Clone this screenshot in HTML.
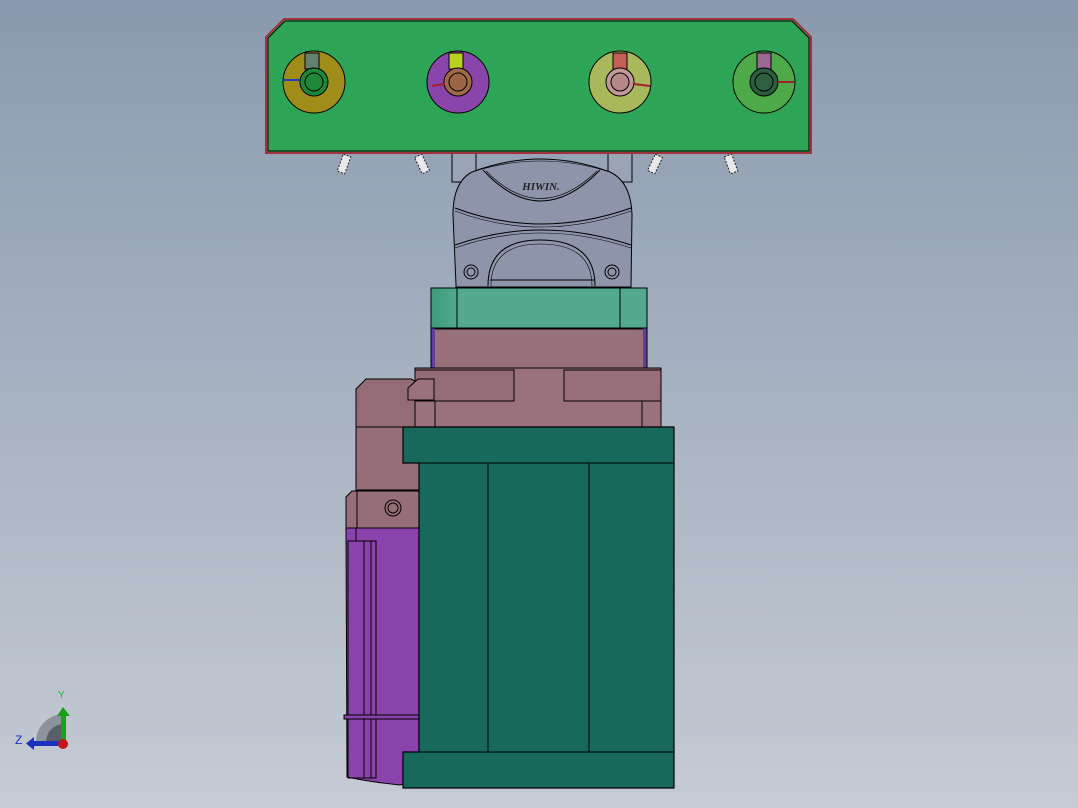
<!DOCTYPE html>
<html><head><meta charset="utf-8"><style>
html,body{margin:0;padding:0;width:1078px;height:808px;overflow:hidden}
</style></head><body>
<svg width="1078" height="808" viewBox="0 0 1078 808" xmlns="http://www.w3.org/2000/svg" font-family="Liberation Sans, sans-serif">
<defs>
<linearGradient id="bg" x1="0" y1="0" x2="0" y2="1">
<stop offset="0" stop-color="#8a9aaf"/><stop offset="1" stop-color="#c6cbd4"/>
</linearGradient>
<linearGradient id="tl" x1="0" y1="0" x2="1" y2="0">
<stop offset="0" stop-color="#3e9a7c"/><stop offset="0.12" stop-color="#52a98e"/><stop offset="1" stop-color="#52a98e"/>
</linearGradient>
</defs>
<rect width="1078" height="808" fill="url(#bg)"/>
<g stroke="#000" stroke-width="1">
<!-- screws -->
<g fill="#e8e8e8" stroke="#222" stroke-dasharray="2 1.5">
<rect x="340" y="155" width="8" height="18" transform="rotate(20 344 164)"/>
<rect x="418" y="155" width="8" height="18" transform="rotate(-25 422 164)"/>
<rect x="651" y="155" width="8" height="18" transform="rotate(25 655 164)"/>
<rect x="727" y="155" width="8" height="18" transform="rotate(-20 731 164)"/>
</g>
<rect x="452" y="150" width="24" height="32" fill="#9aa4b5"/>
<rect x="608" y="150" width="24" height="32" fill="#9aa4b5"/>
<!-- carriage -->
<path d="M456 285 L453 215 Q453 182 472 172 Q540 146 610 172 Q631 182 632 215 L631 287 L456 287 Z" fill="#8e95ab"/>
<path d="M472 172 Q540 150 610 172" fill="none" stroke-width="0.6"/>
<path d="M483 170 Q540 232 600 170" fill="none"/>
<path d="M486 171 Q540 226 597 171" fill="none" stroke-width="0.6"/>
<path d="M455 208 Q540 240 631 208" fill="none"/>
<path d="M455 211 Q540 243 631 211" fill="none" stroke-width="0.6"/>
<path d="M455 245 Q540 215 631 245" fill="none"/>
<path d="M455 248 Q540 218 631 248" fill="none" stroke-width="0.6"/>
<path d="M488 286 Q488 240 540 240 Q595 240 595 286" fill="none"/>
<path d="M491 286 Q491 244 540 244 Q592 244 592 286" fill="none" stroke-width="0.6"/>
<line x1="490" y1="280" x2="594" y2="280"/>
<circle cx="471" cy="272" r="7" fill="none"/><circle cx="471" cy="272" r="4" fill="none"/>
<circle cx="612" cy="272" r="7" fill="none"/><circle cx="612" cy="272" r="4" fill="none"/>
<text x="541" y="190" font-size="11" font-family="Liberation Serif, serif" font-style="italic" font-weight="bold" text-anchor="middle" fill="#222" stroke="none">HIWIN.</text>
<!-- plate -->
<path d="M266 153 L266 37 L284 19 L793 19 L811 37 L811 153 Z" fill="#2ea456" stroke="#a0303a" stroke-width="2"/>
<path d="M268 151 L268 38 L285 21 L792 21 L809 38 L809 151 Z" fill="#2ea456" stroke="#000"/>
<g>
<circle cx="314" cy="82" r="31" fill="#a08c18"/>
<rect x="305" y="53" width="14" height="16" fill="#668070"/>
<circle cx="314" cy="82" r="14" fill="#1a8a38"/><circle cx="314" cy="82" r="9" fill="#1f8838"/>
<line x1="284" y1="80" x2="300" y2="80" stroke="#2040c0" stroke-width="2"/>
<circle cx="458" cy="82" r="31" fill="#8a45ab"/>
<rect x="449" y="53" width="14" height="16" fill="#b8d020"/>
<circle cx="458" cy="82" r="14" fill="#a06a48"/><circle cx="458" cy="82" r="9" fill="#9c6644"/>
<line x1="432" y1="86" x2="445" y2="84" stroke="#a02030" stroke-width="2"/>
<circle cx="620" cy="82" r="31" fill="#a8b85a"/>
<rect x="613" y="53" width="14" height="16" fill="#c06058"/>
<circle cx="620" cy="82" r="14" fill="#c49898"/><circle cx="620" cy="82" r="9" fill="#b48888"/>
<line x1="634" y1="84" x2="650" y2="86" stroke="#a02030" stroke-width="2"/>
<circle cx="764" cy="82" r="31" fill="#4eaa48"/>
<rect x="757" y="53" width="14" height="16" fill="#9a6890"/>
<circle cx="764" cy="82" r="14" fill="#2a5e3e"/><circle cx="764" cy="82" r="9" fill="#2c6040"/>
<line x1="778" y1="82" x2="794" y2="82" stroke="#a02030" stroke-width="2"/>
</g>
<rect x="431" y="288" width="216" height="40" fill="url(#tl)"/>
<line x1="457" y1="288" x2="457" y2="328"/><line x1="620" y1="288" x2="620" y2="328"/>
<rect x="431" y="328" width="216" height="40" fill="#62409a"/>
<rect x="435" y="329" width="208" height="39" fill="#98707a" stroke="none"/>
<line x1="435" y1="329" x2="643" y2="329"/>
<rect x="415" y="368" width="246" height="59" fill="#9a727b"/>
<rect x="415" y="370" width="99" height="31" fill="#946c76"/>
<rect x="564" y="370" width="97" height="31" fill="#986f79"/>
<line x1="435" y1="401" x2="435" y2="427"/><line x1="642" y1="401" x2="642" y2="427"/>
<path d="M356 427 L356 389 L366 379 L411 379 L415 381 L415 427 Z" fill="#946c76"/>
<path d="M408 400 L408 388 L418 379 L434 379 L434 400 Z" fill="#9a727b"/>
<rect x="356" y="427" width="63" height="63" fill="#966e78"/>
<path d="M346 528 L346 497 L352 491 L419 491 L419 528 Z" fill="#966e78"/>
<line x1="357" y1="491" x2="357" y2="528"/>
<circle cx="393" cy="508" r="8" fill="none"/><circle cx="393" cy="508" r="5" fill="none"/>
<path d="M346 528 L419 528 L419 780 L400 785 Q370 782 347 777 Z" fill="#8a42ad"/>
<line x1="356" y1="528" x2="356" y2="541"/>
<rect x="348" y="541" width="28" height="237" fill="none"/>
<line x1="364" y1="541" x2="364" y2="778"/><line x1="371" y1="541" x2="371" y2="778"/>
<rect x="344" y="715" width="75" height="4" fill="#8a42ad"/>
<path d="M403 427 L674 427 L674 788 L403 788 L403 752 L419 752 L419 463 L403 463 Z" fill="#17695c" stroke-width="1.2"/>
<line x1="419" y1="463" x2="674" y2="463"/>
<line x1="419" y1="752" x2="674" y2="752"/>
<line x1="488" y1="463" x2="488" y2="752"/>
<line x1="589" y1="463" x2="589" y2="752"/>
</g>
<path d="M36 742 A28 28 0 0 1 64 714 L64 742 Z" fill="#8e939b"/>
<path d="M46 742 A18 18 0 0 1 64 724 L64 742 Z" fill="#5a5e66"/>
<rect x="61" y="715" width="5" height="27" fill="#1aa01a"/>
<path d="M57 716 L63 707 L70 716 Z" fill="#1aa01a"/>
<rect x="34" y="741" width="28" height="5" fill="#1a30c0"/>
<path d="M34 737 L26 743.5 L34 750 Z" fill="#1a30c0"/>
<circle cx="63" cy="744" r="5" fill="#c01818"/>
<text x="58" y="698" font-size="10" fill="#18c018">Y</text>
<text x="15" y="744" font-size="12" fill="#1a30d0">Z</text>
</svg>
</body></html>
